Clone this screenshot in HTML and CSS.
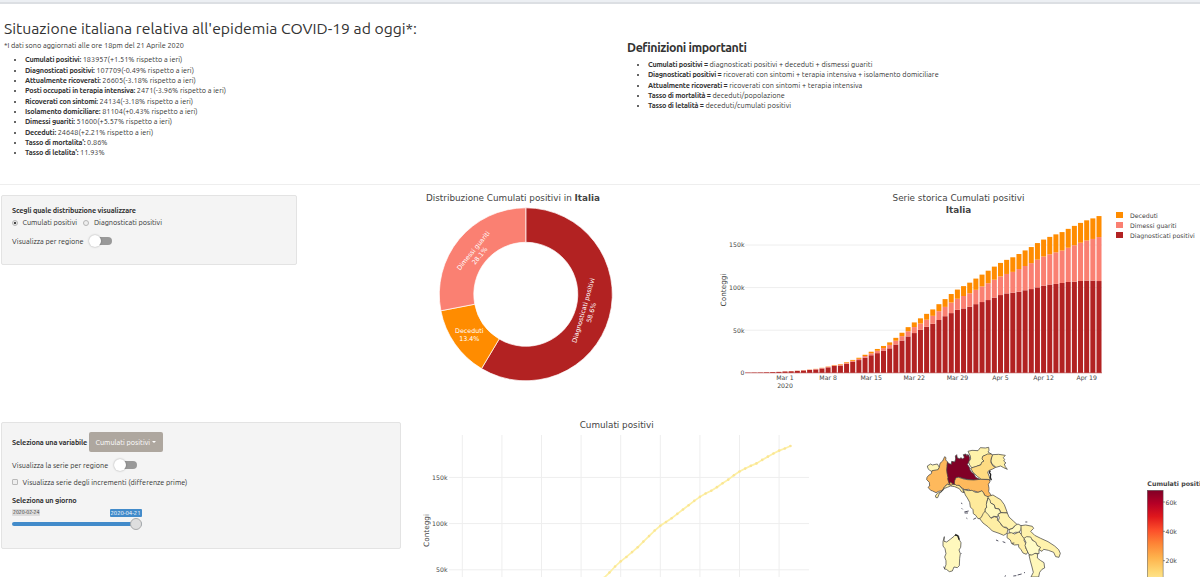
FILE: index.html
```html
<!DOCTYPE html>
<html lang="it">
<head>
    <meta charset="UTF-8">
    <meta name="viewport" content="width=device-width, initial-scale=1.0">
    <title>COVID-19 Italia</title>
    <link rel="stylesheet" href="styles.css">
</head>
<body>
    <div class="topbar"></div>
    <div class="intro">
        <div class="situation">
            <h1>Situazione italiana relativa all'epidemia COVID-19 ad oggi*:</h1>
            <p class="note">*I dati sono aggiornati alle ore 18pm del 21 Aprile 2020</p>
            <ul>
                <li><b>Cumulati positivi:</b> 183957(+1.51% rispetto a ieri)</li>
                <li><b>Diagnosticati positivi:</b> 107709(-0.49% rispetto a ieri)</li>
                <li><b>Attualmente ricoverati:</b> 26605(-3.18% rispetto a ieri)</li>
                <li><b>Posti occupati in terapia intensiva:</b> 2471(-3.96% rispetto a ieri)</li>
                <li><b>Ricoverati con sintomi:</b> 24134(-3.18% rispetto a ieri)</li>
                <li><b>Isolamento domiciliare:</b> 81104(+0.43% rispetto a ieri)</li>
                <li><b>Dimessi guariti:</b> 51600(+5.57% rispetto a ieri)</li>
                <li><b>Deceduti:</b> 24648(+2.21% rispetto a ieri)</li>
                <li><b>Tasso di mortalita':</b> 0.86%</li>
                <li><b>Tasso di letalita':</b> 11.93%</li>
            </ul>
        </div>
        <div class="definitions">
            <h2>Definizioni importanti</h2>
            <ul>
                <li><b>Cumulati positivi =</b> diagnosticati positivi + deceduti + dismessi guariti</li>
                <li><b>Diagnosticati positivi =</b> ricoverati con sintomi + terapia intensiva + isolamento domiciliare</li>
                <li><b>Attualmente ricoverati =</b> ricoverati con sintomi + terapia intensiva</li>
                <li><b>Tasso di mortalità =</b> deceduti/popolazione</li>
                <li><b>Tasso di letalità =</b> deceduti/cumulati positivi</li>
            </ul>
        </div>
    </div>
    <div class="row row1">
        <div class="panel panel1">
            <div class="label">Scegli quale distribuzione visualizzare</div>
            <div class="radios">
                <span class="radio checked"></span><span class="first">Cumulati positivi</span>
                <span class="radio"></span><span>Diagnosticati positivi</span>
            </div>
            <div class="toggle"><span class="t1">Visualizza per regione</span><span class="switch"></span></div>
        </div>
        <svg class="chart" width="300" height="225" viewBox="400 185 300 225">
            <text class="title" x="513" y="201">Distribuzione Cumulati positivi in <tspan class="bold">Italia</tspan></text>
            <g id="donut"></g>
            <g class="slice">
                <g transform="translate(585.5 311) rotate(-74)"><text y="0">Diagnosticati positivi</text><text y="8.3">58.6%</text></g>
                <g transform="translate(475 252) rotate(-51)"><text y="0">Dimessi guariti</text><text y="8.3">28.1%</text></g>
                <g transform="translate(469.3 333)"><text y="0">Deceduti</text><text y="8.3">13.4%</text></g>
            </g>
        </svg>
        <svg class="chart" width="500" height="225" viewBox="700 185 500 225">
            <text class="title" x="958.5" y="201">Serie storica Cumulati positivi</text>
            <text class="title bold" x="958.5" y="213">Italia</text>
            <g id="bars"></g>
            <text class="axis" transform="translate(726 290) rotate(-90)">Conteggi</text>
            <g class="legend">
                <rect x="1116" y="212" width="7" height="6" fill="#ff8c00"/><text x="1130" y="217.8">Deceduti</text>
                <rect x="1116" y="222" width="7" height="6" fill="#fa8072"/><text x="1130" y="227.6">Dimessi guariti</text>
                <rect x="1116" y="232" width="7" height="6" fill="#b22222"/><text x="1130" y="237.6">Diagnosticati positivi</text>
            </g>
        </svg>
    </div>
    <div class="row row2">
        <div class="panel panel2">
            <div class="select"><span class="label">Seleziona una variabile</span><button class="btn">Cumulati positivi <i class="caret"></i></button></div>
            <div class="toggle"><span class="t2">Visualizza la serie per regione</span><span class="switch"></span></div>
            <div class="check"><span class="box"></span><span>Visualizza serie degli incrementi (differenze prime)</span></div>
            <div class="label">Seleziona un giorno</div>
            <div class="slider">
                <div class="dates"><span class="min">2020-02-24</span><span class="cur">2020-04-21</span></div>
                <div class="track"><span class="handle"></span></div>
            </div>
        </div>
        <svg class="chart" width="448" height="167" viewBox="402 410 448 167">
            <text class="title" x="616.7" y="428">Cumulati positivi</text>
            <g id="line"></g>
            <text class="axis" transform="translate(428.5 530.5) rotate(-90)">Conteggi</text>
        </svg>
        <svg class="chart" width="350" height="167" viewBox="850 410 350 167">
            <defs>
                <linearGradient id="scale" x1="0" y1="0" x2="0" y2="1">
                    <stop offset="0" stop-color="#800026"/>
                    <stop offset=".125" stop-color="#b50026"/>
                    <stop offset=".25" stop-color="#df171c"/>
                    <stop offset=".38" stop-color="#fc4e2a"/>
                    <stop offset=".5" stop-color="#fd8235"/>
                    <stop offset=".64" stop-color="#feb24c"/>
                    <stop offset=".78" stop-color="#fed976"/>
                    <stop offset="1" stop-color="#ffffcc"/>
                </linearGradient>
            </defs>
            <g class="map" transform="translate(910 430) scale(.3333)">
                <path fill="#fff6b5" d="M52 108l10-6 5 3 15-3 6 10-4 10-8 1-10 2-8-5-4-4z"/>
                <path fill="#feb95c" d="M88 112l2-12 8-7 6-13 4 3-1 7 6 6-1 12 5 5 3 10-5 5 2 12 3 4 2 8 10 8-8 6-12-3-8 7-8 12-10 2-8 4-10-5-6-2-8-9 5-4-1-11-8-8 1-7 5-6 8-5 2-9 18-3z"/>
                <path fill="#ffeda0" d="M78 203l-2-5 6-8 14-6 8-14 8-7 12 3 8-6 14 5 12 13 4 10-7-2-7-10-14-6-12-2-10 4-8 3-8 9-8 7-5 12z"/>
                <path fill="#800026" d="M112 97l6 4 6 2 1-9 9 2 3-9-1-9 4-4 2 10 7 2 4-3 5 4 5-5-3-8 8-2 3 7 1-5 4 1 3 10-2 12-5 6 7 10 1 7 5 7 7 5 5 10 15 7-16 2-15-1-19-4-18-5-7 4-1 8 2 8-6 3-11-8-3 7-4-13-1-4 1-3-3-14-1-9z"/>
                <path fill="#fff2aa" d="M174 64l12-3 18 1 7-9 15 1 10-2 1 9-3 5 10 6-12 4-12 2-2 8 6 6-7 4-3 8-10 3-7 4-12 2-6-8-3-9 6-9-1-9z"/>
                <path fill="#fedb82" d="M233 72l10 0 6 4-5 8-1 14 6 10 8 4-9 5-12 5-3 5 3 8 2 5 2 11-8-3-18 0-12-9-13-12-7-12 8-3 12-4 10-3 3-8 7-4-6-6 2-8z"/>
                <path fill="#fff0a7" d="M248 74l18-1 20 3-6 7 4 6-3 4 7 6-5 3 3 8 6 8-11-5-9-5-14 4-12-10-3-9 2-10z"/>
                <path fill="#feb95c" d="M138 143l8-1 15 5 12 2 18 1 20-2 27 1 2 6-5 8 2 12-1 10 9 13-9 4-12-4-3-8-7-6-10 3-10-4-8 2-10-7-12 1-8-5-8-8-10 0-5-6 1-8z"/>
                <path fill="#feea9b" d="M160 178l14 4 12-1 10 6 9 0 11-5 5 7 3 7 12 5-4 9-2 10 2 7-6 11 0 10-7 10-7 7-8 1-7-10-7-5-1-12-8-8-2-14-7-13-6-9z"/>
                <path fill="#ffefa5" d="M235 199l14-4 11 7 12 7 11 15 9 24-10 1-10-2-4-10-12-2-4-11-12-5-7-10z"/>
                <path fill="#fff8bb" d="M235 204l5 6 2 9 11 6 2 10 12 2 5 10-7 6-2 7-12-1-9 6-10-9-7-8 1-12 4-3-1-10 2-8z"/>
                <path fill="#feeea4" d="M214 262l6-12 5-6 10 10 8 11 10-5 10 3-1 8 8 5 3 8 10 8 11 4-3 14-10 6-14-6-20-7-12-12-16-12-10-13z"/>
                <path fill="#fff3ae" d="M264 253l9-5 19 1 5 12 14 13 13 12-10 2-8 8-10 3-6-7-10-1-7-9-8-10 3-9z"/>
                <path fill="#fffac2" d="M297 299l12-4 7-9 8-4 11 6-2 10-6 9-11 0-10 5-8-5z"/>
                <path fill="#fff0a7" d="M292 310l12-2 10 4 13-6 7 7 10 8-2 10 5 9 1 16 6 10-5 7-10-4-6-10-7-8 0-7-13 1-8-4-4-11-10-7z"/>
                <path fill="#fff2ac" d="M333 287l14-2 20 4 4 6-9 9 12 12 18 9 22 10 20 13 12 11 5 11-4 12-10-2-6-13-16-6-14-3-5 6-8-4-4-12-10-8-7-11-17 2-9-7-7-9z"/>
                <path fill="#fffbc5" d="M342 325l8-5 12 1 5 10 10 5 5 11 10 5-5 7 0 12-10-1-10 7-10-3-7-15-5-12 3-10z"/>
                <path fill="#fff7b9" d="M357 375l9 0 9-5 8 2-1 12 9 7 11 7 2 16-8 4-7 9-3 14-23 0 7-14-4-16-5-18z"/>
                <path fill="#fff8bd" d="M99 335l4-15-1 14 8 2 12-9 10-8 5-6 9 5 1 10 6 10-1 14-5 8 4 11-2 14-1 22-6 6-10-2-5 12-9 2-9-7-6-1 5-13 0-12-4-11 4-10-3-15-6-8z"/>
                <path class="isle" d="M153 219l4 2M155 235l3 3M163 246l13-3M164 249h10M169 264l3 2M190 268l8-4M258 330l7 3M278 335l8 3M346 276h6M306 340l7-1M153 370l2 2M101 410l3 6M284 439l4-2M310 438l9-1M323 435l12-3M342 428h3"/>
                <path class="coast" d="M241 122l-3 5 4 6-1 9 3 9M135 315l8 2 5 12"/>
            </g>
            <text class="cbtitle" x="1147.3" y="486">Cumulati positivi</text>
            <rect x="1147.3" y="490.3" width="15.8" height="105" fill="url(#scale)" stroke="#555" stroke-width=".5"/>
            <g class="tick start">
                <path d="M1163 502h2M1163 531.3h2M1163 560.7h2" stroke="#444" stroke-width=".6"/>
                <text x="1165.5" y="504.5">60k</text>
                <text x="1165.5" y="533.9">40k</text>
                <text x="1165.5" y="563.2">20k</text>
            </g>
        </svg>
    </div>
    <script src="charts.js"></script>
</body>
</html>
```
FILE: styles.css
```css
*{box-sizing: border-box;}
body{margin: 0;width: 1200px;height: 577px;overflow: hidden;background: #fff;color: #333;font-family: Ubuntu, "Noto Sans", sans-serif;font-size: 7.3px;line-height: 10.35px;}
.topbar{height: 4px;background: #eceff3;border-bottom: 2px solid #dcdfe3;}
.intro{display: grid;grid-template-columns: 623px 1fr;height: 181px;padding: 0 4px;border-bottom: 1px solid #eee;}
h1, h2, p, ul{margin: 0;}
h1{margin-top: 14px;font-size: 15.75px;line-height: 20px;font-weight: 400;white-space: nowrap;}
.note{margin-top: 2px;}
.situation ul{margin-top: 4px;}
ul{padding-left: 21px;}
li{letter-spacing: .03px;}
li::marker{font-size: 7px;}
b, .label{font-weight: 600;letter-spacing: -.2px;}
.definitions h2{margin-top: 34px;font-size: 12.4px;line-height: 18px;font-weight: 600;letter-spacing: -.4px;}
.definitions ul{margin-top: 3px;}

.row{display: grid;align-items: start;}
.row1{grid-template-columns: 400px 300px 500px;height: 225px;}
.row2{grid-template-columns: 402px 448px 350px;height: 167px;}
.chart{display: block;overflow: hidden;}
.panel{margin-left: 1px;padding-left: 10px;background: #f4f4f4;border: 1px solid #e3e3e3;border-radius: 2px;}
.panel1{width: 296px;height: 70px;margin-top: 10px;padding-top: 9px;}
.panel2{width: 400px;height: 127px;margin-top: 12px;padding-top: 9px;}
.panel .label{letter-spacing: -.15px;}

.radios{display: flex;align-items: center;margin-top: 2px;}
.radio{width: 6px;height: 6px;margin-right: 4.5px;border: 1px solid #b5b5b5;border-radius: 50%;background: #eee;}
.checked{background: radial-gradient(circle, #444 0 1.1px, #eee 1.6px);}
.first{margin-right: 6.5px;}
.toggle{display: flex;align-items: center;height: 14px;}
.panel1 .toggle{margin-top: 6px;}
.switch{position: relative;width: 21px;height: 8px;margin-left: 7.5px;border-radius: 4px;background: #999;}
.switch::before{content: "";position: absolute;left: -2px;top: -2px;width: 12px;height: 12px;border-radius: 50%;background: #fff;box-shadow: 0 0 2px rgba(0,0,0,.35);}

.select{display: flex;align-items: center;height: 20px;}
.btn{width: 74px;height: 20px;margin-left: 1.5px;padding: 0;border: 0;border-radius: 2px;background: #aea79f;color: #fff;font: inherit;white-space: nowrap;}
.caret{display: inline-block;vertical-align: 2px;border: 2px solid transparent;border-top-color: #fff;border-bottom: 0;}
.panel2 .toggle{margin-top: 6px;}
.check{display: flex;align-items: center;margin: 5px 0 8px;}
.box{width: 6px;height: 6px;margin-right: 4.5px;border: 1px solid #b9b9b9;border-radius: 1px;background: #eee;}
.slider{width: 129.5px;margin-top: 3px;}
.dates{display: flex;justify-content: space-between;align-items: flex-start;height: 8px;line-height: 8px;}
.dates span{border-radius: 1px;}
.min{height: 7px;background: #ddd;font-size: 5.2px;line-height: 7px;padding: 0 1px;}
.cur{background: #428bca;color: #fff;font-size: 5.9px;padding: 0 1px;}
.track{position: relative;height: 4px;margin-top: 5px;border-radius: 2px;background: #428bca;}
.handle{position: absolute;right: 0;top: -4px;width: 12px;height: 12px;border: 1px solid #aaa;border-radius: 50%;background: #dedede;}

svg text{font-family: Verdana, "DejaVu Sans", sans-serif;fill: #444;text-anchor: middle;}
svg .title{font-size: 8.82px;}
svg .bold{font-weight: 700;}
svg .slice text{font-size: 6.4px;fill: #fff;}
svg .axis{font-size: 7.3px;}
.tick text{font-size: 6.2px;}
.tick .end{text-anchor: end;}
.start text, .legend text{text-anchor: start;}
.legend text{font-size: 6.2px;}
svg .cbtitle{font-size: 6.3px;font-weight: 700;text-anchor: start;}
.grid{stroke: #eee;stroke-width: 1;fill: none;}
.map path{stroke: #444;stroke-width: 2.2;stroke-linejoin: round;}
.map .isle{fill: none;stroke: #334;stroke-width: 2.5;}
.map .coast{fill: none;stroke: #222;stroke-width: 4;}
```
FILE: charts.js
```js
// valori giornalieri dal 24 febbraio al 21 aprile
var totali = [229,322,400,650,888,1128,1694,2036,2502,3089,3858,4636,5883,7375,9172,10149,12462,15113,17660,21157,24747,27980,31506,35713,41035,47021,53578,59138,63927,69176,74386,80539,86498,92472,97689,101739,105792,110574,115242,119827,124632,128948,132547,135586,139422,143626,147577,152271,156363,159516,162488,165155,168941,172434,175925,178972,181228,183957];
var guariti = [1,1,3,45,46,50,83,149,160,276,414,523,589,622,724,1004,1045,1258,1439,1966,2335,2749,2941,4025,4440,5129,6072,7024,7432,8326,9362,10361,10950,12384,13030,14620,15729,16847,18278,19758,20996,21815,22837,24392,26491,28470,30455,32534,34211,35435,37130,38092,40164,42727,44927,47055,48877,51600];
var deceduti = [7,10,12,17,21,29,34,52,79,107,148,197,233,366,463,631,827,1016,1266,1441,1809,2158,2503,2978,3405,4032,4825,5476,6077,6820,7503,8215,9134,10023,10779,11591,12428,13155,13915,14681,15362,15887,16523,17127,17669,18279,18849,19468,19899,20465,21067,21645,22170,22745,23227,23660,24114,24648];

function draw(id, html){
    document.getElementById(id).innerHTML = html;
}

function donut(){
    var cx = 525.8, cy = 294.3, R = 86.5, r = 52, start = 0, html = '';
    var slices = [[.5855,'#b22222'],[.134,'#ff8c00'],[.2805,'#fa8072']];
    function point(radius, part){
        var a = part * Math.PI * 2;
        return (cx + radius * Math.sin(a)) + ' ' + (cy - radius * Math.cos(a));
    }
    slices.forEach(function(s){
        var end = start + s[0], large = s[0] > .5 ? 1 : 0;
        html += '<path fill="'+s[1]+'" stroke="#fff" stroke-width=".7" d="M'+point(R,start)+'A'+R+' '+R+' 0 '+large+' 1 '+point(R,end)+
            'L'+point(r,end)+'A'+r+' '+r+' 0 '+large+' 0 '+point(r,start)+'z"/>';
        start = end;
    });
    draw('donut', html);
}

function bars(){
    var y0 = 372.8, k = 42.6 / 50000, step = 6.157, x0 = 785 - step * 6, html = '';
    function rect(x, from, to, color){
        return '<rect x="'+(x - 2.5)+'" y="'+(y0 - to * k)+'" width="5" height="'+((to - from) * k)+'" fill="'+color+'"/>';
    }
    ['0','50k','100k','150k'].forEach(function(t, i){
        var y = y0 - i * 42.6;
        html += '<path class="grid" d="M745 '+y+'H1102"/><g class="tick"><text class="end" x="744.5" y="'+(y + 2.3)+'">'+t+'</text></g>';
    });
    totali.forEach(function(t, i){
        var x = x0 + i * step, pos = t - guariti[i] - deceduti[i];
        html += rect(x, 0, pos, '#b22222') + rect(x, pos, pos + guariti[i], '#fa8072') + rect(x, pos + guariti[i], t, '#ff8c00');
    });
    html += '<path d="M745 '+y0+'H1102" stroke="#b22222" stroke-width=".5"/><g class="tick">';
    ['Mar 1','Mar 8','Mar 15','Mar 22','Mar 29','Apr 5','Apr 12','Apr 19'].forEach(function(t, i){
        html += '<text x="'+(785 + i * step * 7)+'" y="380.3">'+t+'</text>';
    });
    draw('bars', html + '<text x="785" y="388">2020</text></g>');
}

function line(){
    var y0 = 616, k = 46.2 / 50000, week = 39.6, html = '', pts = [], dots = '';
    for(var i = 0; i < 9; i++){
        html += '<path class="grid" d="M'+(462.3 + i * week)+' 435V577"/>';
    }
    ['50k','100k','150k'].forEach(function(t, i){
        var y = y0 - (i + 1) * 46.2;
        html += '<path class="grid" d="M449 '+y+'H809"/><g class="tick"><text class="end" x="447.5" y="'+(y + 2.5)+'">'+t+'</text></g>';
    });
    totali.forEach(function(t, i){
        var x = 468 + i * week / 7, y = y0 - t * k;
        pts.push(x + ',' + y);
        dots += '<circle cx="'+x+'" cy="'+y+'" r="1.3" fill="#fae596"/>';
    });
    draw('line', html + '<polyline points="'+pts.join(' ')+'" fill="none" stroke="#fdf0a4" stroke-width="1.7"/>' + dots);
}

donut();
bars();
line();
```
